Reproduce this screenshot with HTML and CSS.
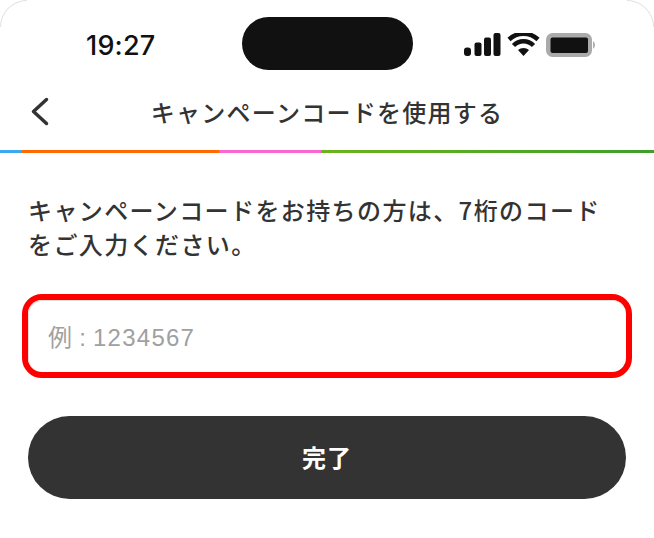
FILE: index.html
```html
<!DOCTYPE html>
<html lang="ja">
<head>
<meta charset="utf-8">
<title>キャンペーンコードを使用する</title>
<link rel="stylesheet" href="styles.css">
</head>
<body>
<div class="screen">
  <span class="corner corner-left"></span>
  <span class="corner corner-right"></span>
  <header class="status">
    <span class="time">19:27</span>
    <span class="island"></span>
    <span class="status-icons">
      <svg width="37" height="24" viewBox="0 0 37 24"><rect x="0" y="14.500" width="7" height="8.500" rx="3"/><rect x="10.500" y="9.500" width="7" height="13.500" rx="2"/><rect x="20" y="4.500" width="7" height="18.500" rx="2"/><rect x="29.500" y="0" width="7" height="23" rx="2"/></svg>
      <svg width="33" height="24" viewBox="0 0 33 24"><path d="M16.500 23 L11 17 A8.500 8.500 0 0 1 22 17 Z"/><path d="M6.500 12.500 A14 14 0 0 1 26.500 12.500" class="arc"/><path d="M2 6.500 A21 21 0 0 1 31 6.500" class="arc"/></svg>
      <svg width="51" height="24" viewBox="0 0 51 24"><rect x="0" y="0" width="46" height="24" rx="6.500" class="shell"/><rect x="4.500" y="4.500" width="37.500" height="15.500" rx="2"/><path d="M47 8 A5 5 0 0 1 47 16 Z" class="cap"/></svg>
    </span>
  </header>
  <nav class="nav">
    <svg class="back" width="24" height="30" viewBox="0 0 24 30"><path d="M18.500 2.500 L5.500 14.500 L18.500 26.500"/></svg>
    <h1 class="title">キャンペーンコードを使用する</h1>
  </nav>
  <div class="stripe">
    <span class="seg seg-blue"></span>
    <span class="seg seg-orange"></span>
    <span class="seg seg-pink"></span>
    <span class="seg seg-green"></span>
  </div>
  <main class="content">
    <p class="lead">キャンペーンコードをお持ちの方は、7桁のコードをご入力ください。</p>
    <div class="field">
      <input class="code" type="text" placeholder="例 : 1234567">
    </div>
    <button class="done" type="button">完了</button>
  </main>
</div>
</body>
</html>
```
FILE: styles.css
```css
* { box-sizing: border-box; }
html, body { margin: 0; padding: 0; background: #fff; }
body { font-family: "Noto Sans CJK JP", "Noto Sans", sans-serif; }
.screen { position: relative; width: 654px; height: 538px; overflow: hidden; background: #fff; }
.corner { position: absolute; top: 0; width: 27px; height: 27px; border-top: 1px solid #e2e2e2; }
.corner-left { left: 0; border-left: 1px solid #e2e2e2; border-top-left-radius: 27px; }
.corner-right { right: 0; border-right: 1px solid #e2e2e2; border-top-right-radius: 27px; }
.status { height: 70px; display: flex; align-items: flex-start; padding-left: 86px; }
.time { width: 156px; margin-top: 29px; font-family: Inter, "Liberation Sans", sans-serif; font-size: 27px; line-height: 34px; font-weight: 500; letter-spacing: 0.2px; color: #111; }
.island { width: 171px; height: 53px; margin-top: 17px; border-radius: 27px; background: #111; }
.status-icons { display: flex; align-items: flex-start; margin: 33px 0 0 51px; gap: 6px; }
.status-icons svg { display: block; fill: #111; }
.status-icons .arc { fill: none; stroke: #111; stroke-width: 4.500px; }
.status-icons .shell { fill: #aaa; }
.status-icons .cap { fill: #aaa; }
.nav { height: 80px; display: flex; align-items: center; position: relative; justify-content: center; padding-top: 4px; }
.back { position: absolute; left: 28px; top: 27px; fill: none; stroke: #333; stroke-width: 3.500px; stroke-linecap: round; stroke-linejoin: round; }
.title { margin: 0; font-size: 24px; line-height: 36px; font-weight: 500; color: #333; letter-spacing: 1.25px; }
.stripe { display: flex; height: 3px; }
.seg { display: block; height: 100%; }
.seg-blue { width: 22px; background: #3ba9f0; }
.seg-orange { width: 197px; background: #ff6a00; }
.seg-pink { width: 102px; background: #f868d0; }
.seg-green { flex: 1; background: linear-gradient(90deg, #6cb31c, #3f9e2c); }
.content { padding: 40px 28px 0; }
.lead { margin: 0; max-width: 580px; font-size: 24px; line-height: 34px; font-weight: 500; color: #333; letter-spacing: 1.4px; }
.field { margin: 33px -6px 0; height: 84px; border: 6px solid #f00; border-radius: 20px; background: #fff; }
.code { display: block; width: 100%; height: 100%; border: 0; outline: 0; background: transparent; padding: 3px 20px 0; border-radius: 14px; box-shadow: inset 1px 1px 1px #ddd; font-family: "Liberation Sans", "Noto Sans CJK JP", sans-serif; font-size: 24px; color: #333; letter-spacing: 1.25px; word-spacing: -2px; }
.code::placeholder { color: #a0a0a0; opacity: 1; }
.done { display: block; width: 598px; height: 83px; margin-top: 38px; padding: 0 0 3px; border: 0; border-radius: 42px; background: #333; color: #fff; font-family: "Noto Sans CJK JP", sans-serif; font-size: 24px; font-weight: 700; letter-spacing: 1px; }
```
